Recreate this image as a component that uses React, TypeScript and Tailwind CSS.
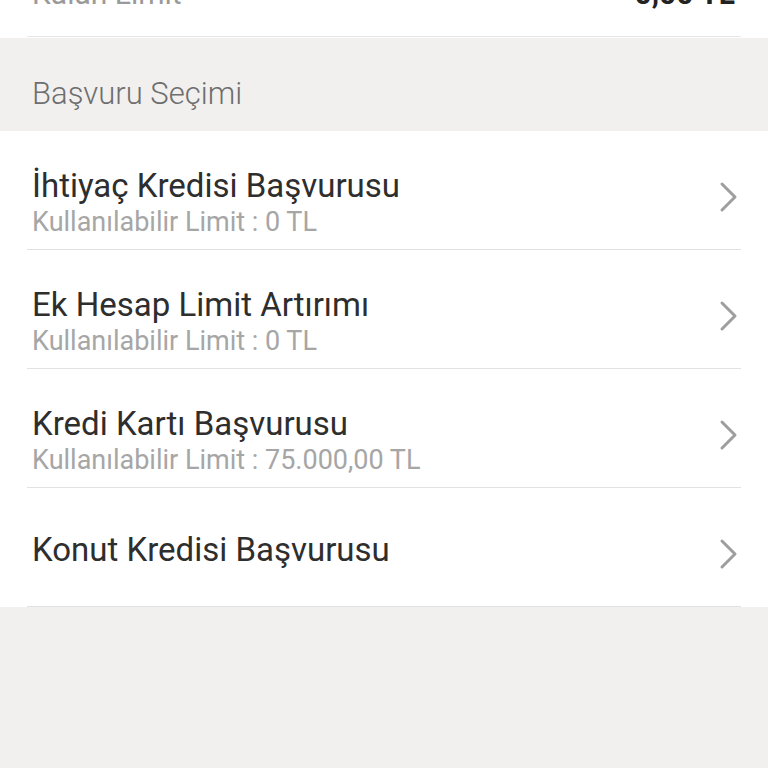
import React from "react";

const items = [
  { title: "İhtiyaç Kredisi Başvurusu", sub: "Kullanılabilir Limit : 0 TL" },
  { title: "Ek Hesap Limit Artırımı", sub: "Kullanılabilir Limit : 0 TL" },
  { title: "Kredi Kartı Başvurusu", sub: "Kullanılabilir Limit : 75.000,00 TL" },
  { title: "Konut Kredisi Başvurusu", sub: "" },
];

function Chevron() {
  return (
    <svg width="20" height="32" viewBox="0 0 20 32" fill="none" className="mt-[13px]">
      <path d="M3 3 L16 16 L3 29" stroke="#9e9e9e" strokeWidth="3" strokeLinecap="round" strokeLinejoin="round" />
    </svg>
  );
}

export default function App() {
  return (
    <div className="w-[768px] h-[768px] bg-[#f1f0ee] overflow-hidden" style={{ fontFamily: "Roboto, 'Noto Sans', sans-serif" }}>
      <div className="bg-white h-[38px]">
        <div className="mx-[27px] h-[37px] border-b border-[#e6e6e6] overflow-hidden">
          <div className="flex justify-between px-[5px] pr-[6px] -mt-[24px] leading-[36px]">
            <span className="text-[30px] text-[#9a9a9a]">Kalan Limit</span>
            <span className="text-[30px] font-bold text-[#222]">0,00 TL</span>
          </div>
        </div>
      </div>
      <div className="h-[93px] flex items-center px-[32px] pt-[20px]">
        <span className="text-[31px] font-light text-[#6e6e6e]">Başvuru Seçimi</span>
      </div>
      <div className="bg-white">
        {items.map((it) => (
          <div key={it.title} className="mx-[27px] h-[119px] border-b border-[#e2e2e2] flex items-center justify-between pl-[5px] pr-[2px]">
            <div className={it.sub ? "flex flex-col pt-[24px]" : "flex flex-col pt-[6px]"}>
              <span className="text-[33px] leading-[40px] text-[#2e2e2e]">{it.title}</span>
              {it.sub && <span className="text-[27px] leading-[33px] text-[#a6a6a6]">{it.sub}</span>}
            </div>
            <Chevron />
          </div>
        ))}
      </div>
    </div>
  );
}
